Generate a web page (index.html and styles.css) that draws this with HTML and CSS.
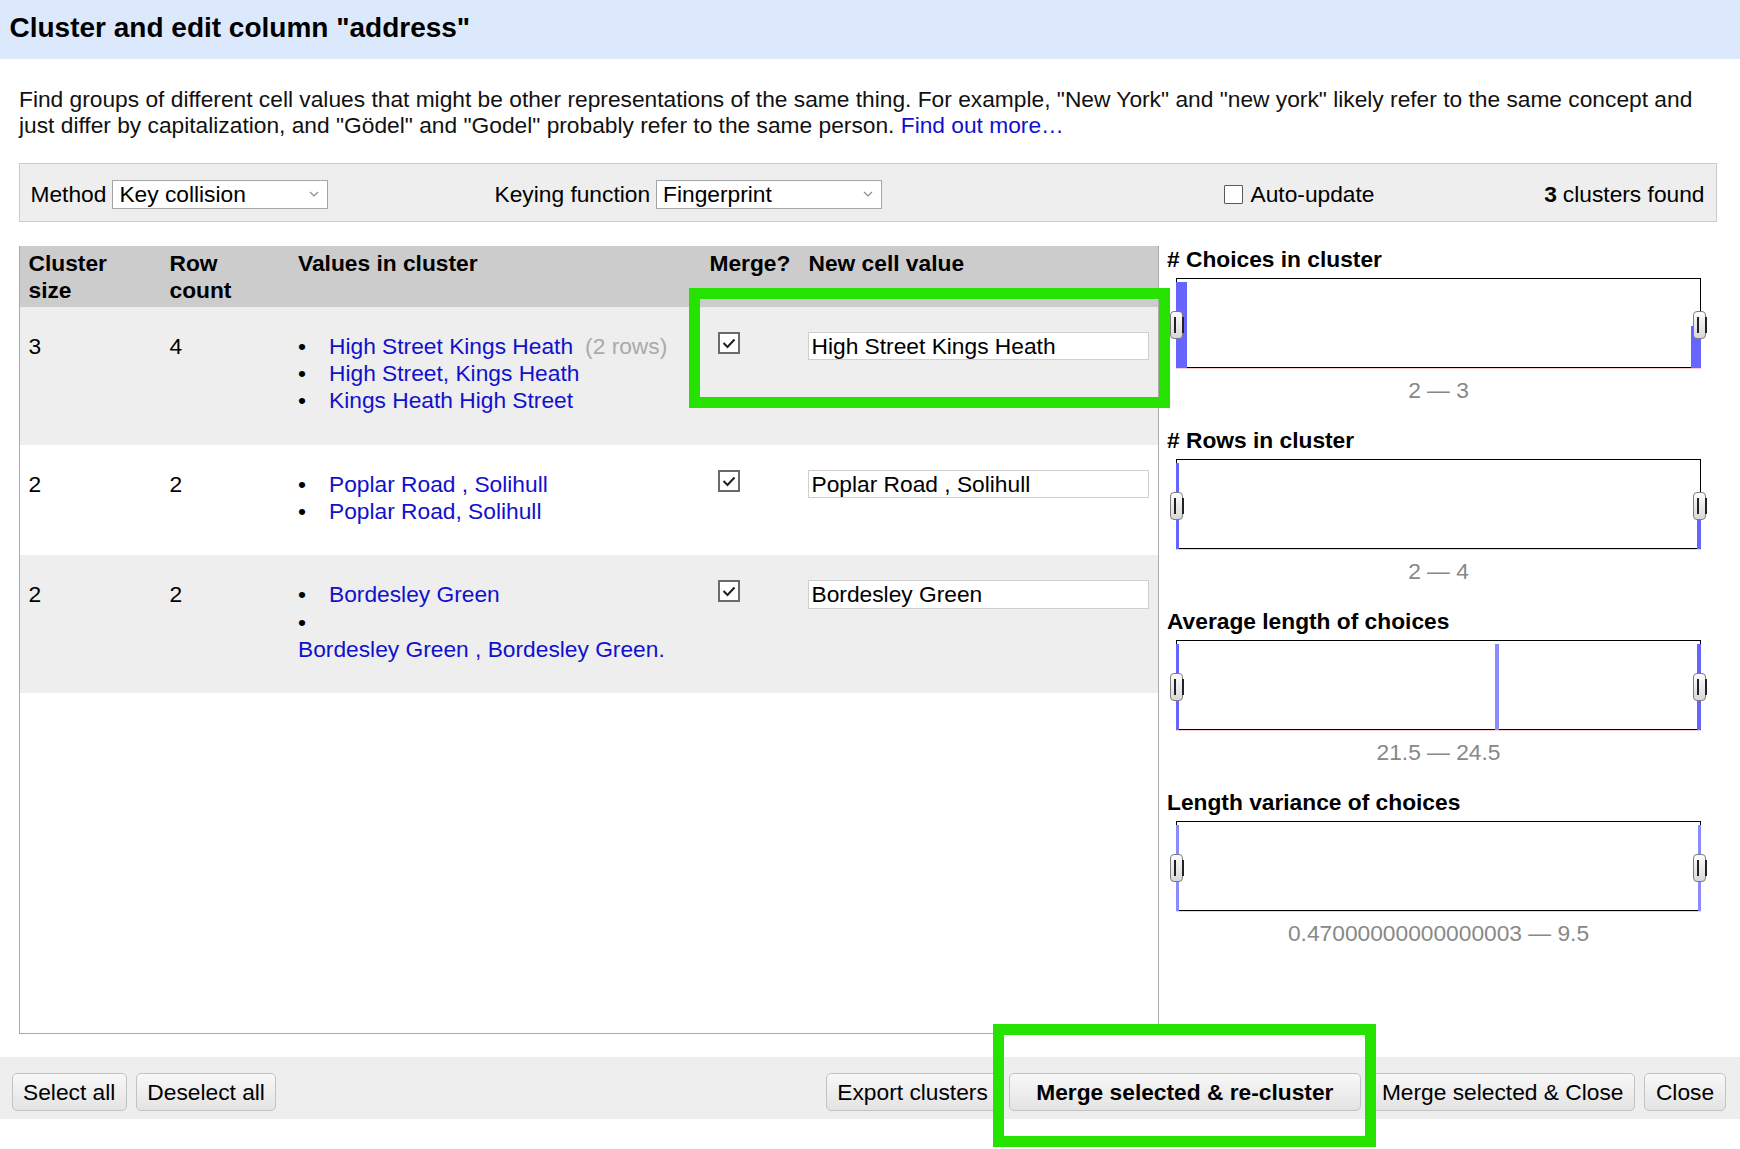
FILE: index.html
```html
<!DOCTYPE html>
<html>
<head>
<meta charset="utf-8">
<title>Cluster and edit column</title>
<link rel="stylesheet" href="styles.css">
</head>
<body>
<div class="dialog">
  <header class="dlg-head">
    <h1 class="dlg-title">Cluster and edit column "address"</h1>
  </header>

  <section class="dlg-body">
    <p class="intro"><span>Find groups of different cell values that might be other representations of the same thing. For example, "New York" and "new york" likely refer to the same concept and</span> <span>just differ by capitalization, and "Gödel" and "Godel" probably refer to the same person.</span> <a class="link" href="#">Find out more…</a></p>

    <div class="toolbar">
      <div class="tb-cell tb-method">
        <span>Method</span>
        <div class="select sel-method"><span>Key collision</span><svg class="chev" width="10" height="6" viewBox="0 0 10 6"><path d="M1 1 L5 5 L9 1" fill="none" stroke="#8a8a8a" stroke-width="1.2"/></svg></div>
      </div>
      <div class="tb-cell tb-keying">
        <span>Keying function</span>
        <div class="select sel-key"><span>Fingerprint</span><svg class="chev" width="10" height="6" viewBox="0 0 10 6"><path d="M1 1 L5 5 L9 1" fill="none" stroke="#8a8a8a" stroke-width="1.2"/></svg></div>
      </div>
      <div class="tb-cell tb-auto">
        <span class="cb"></span><span>Auto-update</span>
      </div>
      <div class="tb-cell tb-count"><b>3</b> clusters found</div>
    </div>

    <div class="work">
      <div class="table-wrap">
        <table class="clusters">
          <colgroup>
            <col class="c-size"><col class="c-count"><col class="c-values"><col class="c-merge"><col class="c-new">
          </colgroup>
          <thead>
            <tr>
              <th>Cluster<br>size</th>
              <th>Row<br>count</th>
              <th>Values in cluster</th>
              <th>Merge?</th>
              <th>New cell value</th>
            </tr>
          </thead>
          <tbody>
            <tr class="odd">
              <td>3</td>
              <td>4</td>
              <td>
                <ul class="vals">
                  <li><a class="link" href="#">High Street Kings Heath</a><span class="rows">(2 rows)</span></li>
                  <li><a class="link" href="#">High Street, Kings Heath</a></li>
                  <li><a class="link" href="#">Kings Heath High Street</a></li>
                </ul>
              </td>
              <td><span class="chk"><svg width="22" height="22" viewBox="0 0 22 22"><path d="M5.5 11 L9.5 15 L16.5 7.5" fill="none" stroke="#222" stroke-width="2.1"/></svg></span></td>
              <td><div class="inp">High Street Kings Heath</div></td>
            </tr>
            <tr>
              <td>2</td>
              <td>2</td>
              <td>
                <ul class="vals">
                  <li><a class="link" href="#">Poplar Road , Solihull</a></li>
                  <li><a class="link" href="#">Poplar Road, Solihull</a></li>
                </ul>
              </td>
              <td><span class="chk"><svg width="22" height="22" viewBox="0 0 22 22"><path d="M5.5 11 L9.5 15 L16.5 7.5" fill="none" stroke="#222" stroke-width="2.1"/></svg></span></td>
              <td><div class="inp">Poplar Road , Solihull</div></td>
            </tr>
            <tr class="odd">
              <td>2</td>
              <td>2</td>
              <td>
                <ul class="vals">
                  <li><a class="link" href="#">Bordesley Green</a></li>
                  <li class="wrapped"><a class="link" href="#">Bordesley Green , Bordesley Green.</a></li>
                </ul>
              </td>
              <td><span class="chk"><svg width="22" height="22" viewBox="0 0 22 22"><path d="M5.5 11 L9.5 15 L16.5 7.5" fill="none" stroke="#222" stroke-width="2.1"/></svg></span></td>
              <td><div class="inp">Bordesley Green</div></td>
            </tr>
          </tbody>
        </table>
      </div>

      <aside class="facets">
        <div class="facet">
          <h3 class="facet-title"># Choices in cluster</h3>
          <div class="chart">
            <span class="bar" style="left:-1px;width:11px;top:3px"></span>
            <span class="bar" style="right:-1px;width:10px;top:47px"></span>
            <span class="handle h-left"></span><span class="handle h-right"></span>
          </div>
          <div class="range">2 — 3</div>
        </div>
        <div class="facet">
          <h3 class="facet-title"># Rows in cluster</h3>
          <div class="chart">
            <span class="bar" style="left:-1px;width:3px;top:3px"></span>
            <span class="bar" style="right:-1px;width:4px;top:44px"></span>
            <span class="handle h-left"></span><span class="handle h-right"></span>
          </div>
          <div class="range">2 — 4</div>
        </div>
        <div class="facet">
          <h3 class="facet-title">Average length of choices</h3>
          <div class="chart">
            <span class="bar" style="left:-1px;width:3px;top:3px"></span>
            <span class="bar bar-soft" style="left:318px;width:4px;top:3px"></span>
            <span class="bar" style="right:-1px;width:4px;top:3px"></span>
            <span class="handle h-left"></span><span class="handle h-right"></span>
          </div>
          <div class="range">21.5 — 24.5</div>
        </div>
        <div class="facet">
          <h3 class="facet-title">Length variance of choices</h3>
          <div class="chart">
            <span class="bar bar-soft" style="left:-1px;width:3px;top:3px"></span>
            <span class="bar bar-soft" style="right:-1px;width:3px;top:3px"></span>
            <span class="handle h-left"></span><span class="handle h-right"></span>
          </div>
          <div class="range">0.47000000000000003 — 9.5</div>
        </div>
      </aside>
    </div>
  </section>

  <footer class="dlg-foot">
    <div class="btn-group">
      <button class="btn">Select all</button>
      <button class="btn">Deselect all</button>
    </div>
    <div class="btn-group right">
      <button class="btn">Export clusters</button>
      <button class="btn btn-primary">Merge selected &amp; re-cluster</button>
      <button class="btn">Merge selected &amp; Close</button>
      <button class="btn">Close</button>
    </div>
  </footer>
</div>

<div class="hl hl-merge"></div>
<div class="hl hl-button"></div>
</body>
</html>
```

FILE: styles.css
```css
* { box-sizing: border-box; }

html, body {
  margin: 0;
  padding: 0;
  background: #fff;
}

body {
  font-family: "Liberation Sans", Arial, sans-serif;
  font-size: 22.75px;
  line-height: 26.4px;
  color: #000;
  width: 1740px;
  height: 1149px;
  position: relative;
  overflow: hidden;
}

.link { color: #1111cc; text-decoration: none; }

/* header */
.dlg-head {
  height: 59px;
  background: #dce8fb;
  padding: 11.5px 0 0 9.5px;
}
.dlg-title {
  margin: 0;
  font-size: 28px;
  line-height: 32px;
  font-weight: bold;
  color: #000;
}

/* body */
.dlg-body {
  padding: 27px 23px 23.5px 19px;
}
.intro {
  margin: 0;
  line-height: 26.4px;
  color: #111;
}

/* toolbar */
.toolbar {
  margin-top: 24px;
  height: 59px;
  background: #eee;
  border: 1px solid #ccc;
  display: flex;
  align-items: center;
  padding: 4px 11.5px 0 10.5px;
}
.tb-cell { display: flex; align-items: center; }
.tb-method { width: 464px; }
.tb-keying { width: 729px; }
.tb-count { margin-left: auto; }
.tb-count b { margin-right: 6px; }

.select {
  margin-left: 6px;
  height: 29px;
  background: #fff;
  border: 1px solid #a6a6a6;
  display: flex;
  align-items: center;
  justify-content: space-between;
  padding: 0 8px 0 6px;
}
.sel-method { width: 215.5px; }
.sel-key { width: 226px; }
.chev { display: block; }

.cb {
  width: 19px;
  height: 19px;
  border: 1.5px solid #5a5a5a;
  background: #fff;
  margin-right: 8px;
  border-radius: 1px;
}

/* work area */
.work {
  margin-top: 24px;
  display: flex;
  align-items: flex-start;
}
.table-wrap {
  width: 1140px;
  height: 788px;
  border: 1px solid #aaa;
  border-top: none;
  flex: none;
}

.clusters {
  width: 100%;
  table-layout: fixed;
  border-collapse: collapse;
}
.c-size { width: 140px; }
.c-count { width: 128.5px; }
.c-values { width: 411.5px; }
.c-merge { width: 99px; }
.c-new { width: 359px; }

.clusters th {
  background: #cccccc;
  text-align: left;
  vertical-align: top;
  font-weight: bold;
  line-height: 27px;
  padding: 4.5px 9.5px 2.5px 9.5px;
  height: 61px;
}
.clusters th:first-child { padding-left: 8.5px; }
.clusters td {
  vertical-align: top;
  line-height: 27.3px;
  padding: 26px 9.5px 30px 9.5px;
}
.clusters td:first-child { padding-left: 8.5px; }
.clusters tr.odd td { background: #eee; }

.vals {
  margin: 0;
  padding: 0;
  list-style: none;
}
.vals li::before {
  content: "•";
  display: inline-block;
  width: 31px;
  color: #000;
}
.vals li.wrapped a { display: block; }
.rows { color: #aaa; margin-left: 12px; }

.chk {
  display: block;
  width: 22px;
  height: 22px;
  margin: -1px 0 0 8px;
  border: 2px solid #6a6a6a;
  background: #fff;
  position: relative;
}
.chk svg { position: absolute; left: -2px; top: -2px; }

.inp {
  width: 341px;
  height: 28.5px;
  border: 1px solid #cfcfcf;
  background: #fff;
  padding: 0 3px;
  line-height: 26.5px;
  margin: -1px 0 0 -1px;
  white-space: nowrap;
}

/* facets */
.facets {
  margin-left: 8px;
  flex: 1;
}
.facet + .facet { margin-top: 24px; }
.facet-title {
  margin: 0;
  font-size: 22.75px;
  line-height: 26.4px;
  font-weight: bold;
}
.chart {
  position: relative;
  width: 525px;
  height: 90px;
  margin: 5.4px 0 0 9px;
  border: 1px solid #000;
  box-shadow: 0 1px 0 #f7d0d0;
}
.bar {
  position: absolute;
  bottom: -1px;
  background: #6666ff;
}
.bar-soft { background: #8c8cff; }
.handle {
  position: absolute;
  top: 32px;
  width: 13px;
  height: 28px;
  border: 1px solid #7d7d7d;
  border-radius: 4px;
  background: linear-gradient(#fdfdfd, #d8d8d8);
}
.handle::before {
  content: "";
  position: absolute;
  left: 2.5px;
  top: 5px;
  width: 6px;
  height: 16px;
  border-left: 2px solid #222;
  border-right: 2px solid #222;
}
.h-left { left: -7px; }
.h-right { left: 516px; }
.range {
  margin: 9px 0 0 9px;
  width: 525px;
  text-align: center;
  color: #888;
}

/* footer */
.dlg-foot {
  height: 62px;
  background: #eee;
  display: flex;
  align-items: flex-start;
  padding: 15.5px 14.4px 0 11.5px;
}
.btn-group { display: flex; gap: 9px; }
.btn-group.right { margin-left: auto; gap: 9.5px; }
.btn {
  font-family: "Liberation Sans", Arial, sans-serif;
  font-size: 22.75px;
  line-height: 26px;
  height: 38px;
  padding: 0 10.5px;
  color: #000;
  border: 1px solid #c2c2c2;
  border-radius: 5px;
  background: linear-gradient(#f8f8f8, #e3e3e3);
  margin: 0;
}
.btn-primary {
  font-weight: bold;
  padding: 0 26.5px;
}

/* annotation highlights */
.hl {
  position: absolute;
  border: 11px solid #25e200;
  pointer-events: none;
}
.hl-merge { left: 689px; top: 288px; width: 481px; height: 120px; }
.hl-button { left: 993px; top: 1024px; width: 383px; height: 123px; }
```
